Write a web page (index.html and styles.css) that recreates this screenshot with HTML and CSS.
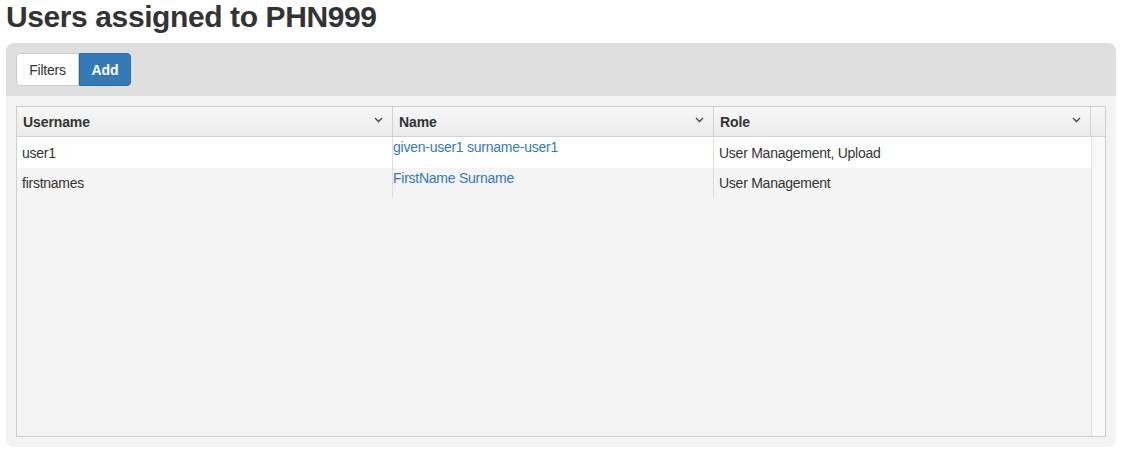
FILE: index.html
```html
<!DOCTYPE html>
<html>
<head>
<meta charset="utf-8">
<link rel="stylesheet" href="styles.css">
</head>
<body>
<h1 class="title">Users assigned to PHN999</h1>
<div class="panel">
  <div class="toolbar">
    <div class="btn-group">
      <button class="btn btn-default">Filters</button>
      <button class="btn btn-primary">Add</button>
    </div>
  </div>
  <div class="panel-body">
    <div class="grid">
      <div class="grid-head">
        <div class="hcell col-user"><span>Username</span><svg class="chev" width="9" height="6" viewBox="0 0 9 6"><polyline points="1,1 4.5,4.5 8,1" fill="none" stroke="#444" stroke-width="1.3"/></svg></div>
        <div class="hcell col-name"><span>Name</span><svg class="chev" width="9" height="6" viewBox="0 0 9 6"><polyline points="1,1 4.5,4.5 8,1" fill="none" stroke="#444" stroke-width="1.3"/></svg></div>
        <div class="hcell col-role"><span>Role</span><svg class="chev" width="9" height="6" viewBox="0 0 9 6"><polyline points="1,1 4.5,4.5 8,1" fill="none" stroke="#444" stroke-width="1.3"/></svg></div>
        <div class="hcell col-scroll"></div>
      </div>
      <div class="grid-body">
        <div class="rows">
          <div class="row row-odd">
            <div class="cell col-user">user1</div>
            <div class="cell col-name link-cell"><a href="#">given-user1 surname-user1</a></div>
            <div class="cell col-role">User Management, Upload</div>
          </div>
          <div class="row row-even">
            <div class="cell col-user">firstnames</div>
            <div class="cell col-name link-cell"><a href="#">FirstName Surname</a></div>
            <div class="cell col-role">User Management</div>
          </div>
        </div>
        <div class="scroll-track"></div>
      </div>
    </div>
  </div>
</div>
</body>
</html>
```
FILE: styles.css
```css
* { box-sizing: border-box; }
html, body { margin: 0; padding: 0; background: #fff; }
body {
  font-family: "Liberation Sans", Arial, sans-serif;
  font-size: 14px;
  color: #333;
  padding: 0 7px 0 6px;
}
.title {
  margin: 0 0 10px 0;
  font-size: 30px;
  line-height: 33px;
  font-weight: 700;
  color: #333;
  letter-spacing: -0.4px;
}
.panel {
  background: #f3f3f3;
  border-radius: 8px;
  overflow: hidden;
  height: 404px;
  display: flex;
  flex-direction: column;
}
.toolbar {
  background: #dfdfdf;
  padding: 10px 10px;
  height: 53px;
}
.btn-group { display: flex; }
.btn {
  font-family: "Liberation Sans", Arial, sans-serif;
  font-size: 14px;
  line-height: 20px;
  height: 33px;
  padding: 6px 0;
  border: 1px solid #ccc;
  margin: 0;
  cursor: pointer;
  text-align: center;
}
.btn-default {
  background: #fff;
  color: #333;
  border-radius: 4px 0 0 4px;
  width: 63px;
  letter-spacing: -0.2px;
}
.btn-primary {
  background: #337ab7;
  border-color: #2e6da4;
  color: #fff;
  border-radius: 0 4px 4px 0;
  width: 52px;
  font-weight: 700;
}
.panel-body {
  flex: 1;
  padding: 10px 10px 10px 10px;
  display: flex;
}
.grid {
  flex: 1;
  border: 1px solid #cfcfcf;
  display: flex;
  flex-direction: column;
  background: #f3f3f3;
}
.grid-head {
  display: flex;
  height: 30px;
  background: linear-gradient(#f7f7f7, #ececec);
  border-bottom: 1px solid #d4d4d4;
}
.hcell {
  display: flex;
  align-items: center;
  justify-content: space-between;
  font-weight: 700;
  padding: 0 9px 0 6px;
  border-right: 1px solid #d4d4d4;
  letter-spacing: -0.1px;
}
.chev { display: block; margin-top: -3px; }
.col-user { width: 376px; }
.col-name { width: 321px; }
.col-role { width: 377px; }
.col-scroll { flex: 1; border-right: none; padding: 0; }
.grid-body {
  flex: 1;
  display: flex;
}
.rows { width: 1074px; }
.row {
  display: flex;
  height: 30px;
}
.row-odd { background: #fff; height: 31px; }
.row-even { background: #f4f4f4; }
.cell {
  padding: 0 5px;
  display: flex;
  align-items: center;
  border-right: 1px solid #ddd;
  white-space: nowrap;
  letter-spacing: -0.25px;
}
.cell.col-role { border-right: none; }
.link-cell {
  align-items: flex-start;
  padding: 2px 0 0 0;
}
.link-cell a {
  color: #337ab7;
  text-decoration: none;
}
.scroll-track {
  flex: 1;
  background: #f9f9f9;
  border-left: 1px solid #e2e2e2;
}
```
